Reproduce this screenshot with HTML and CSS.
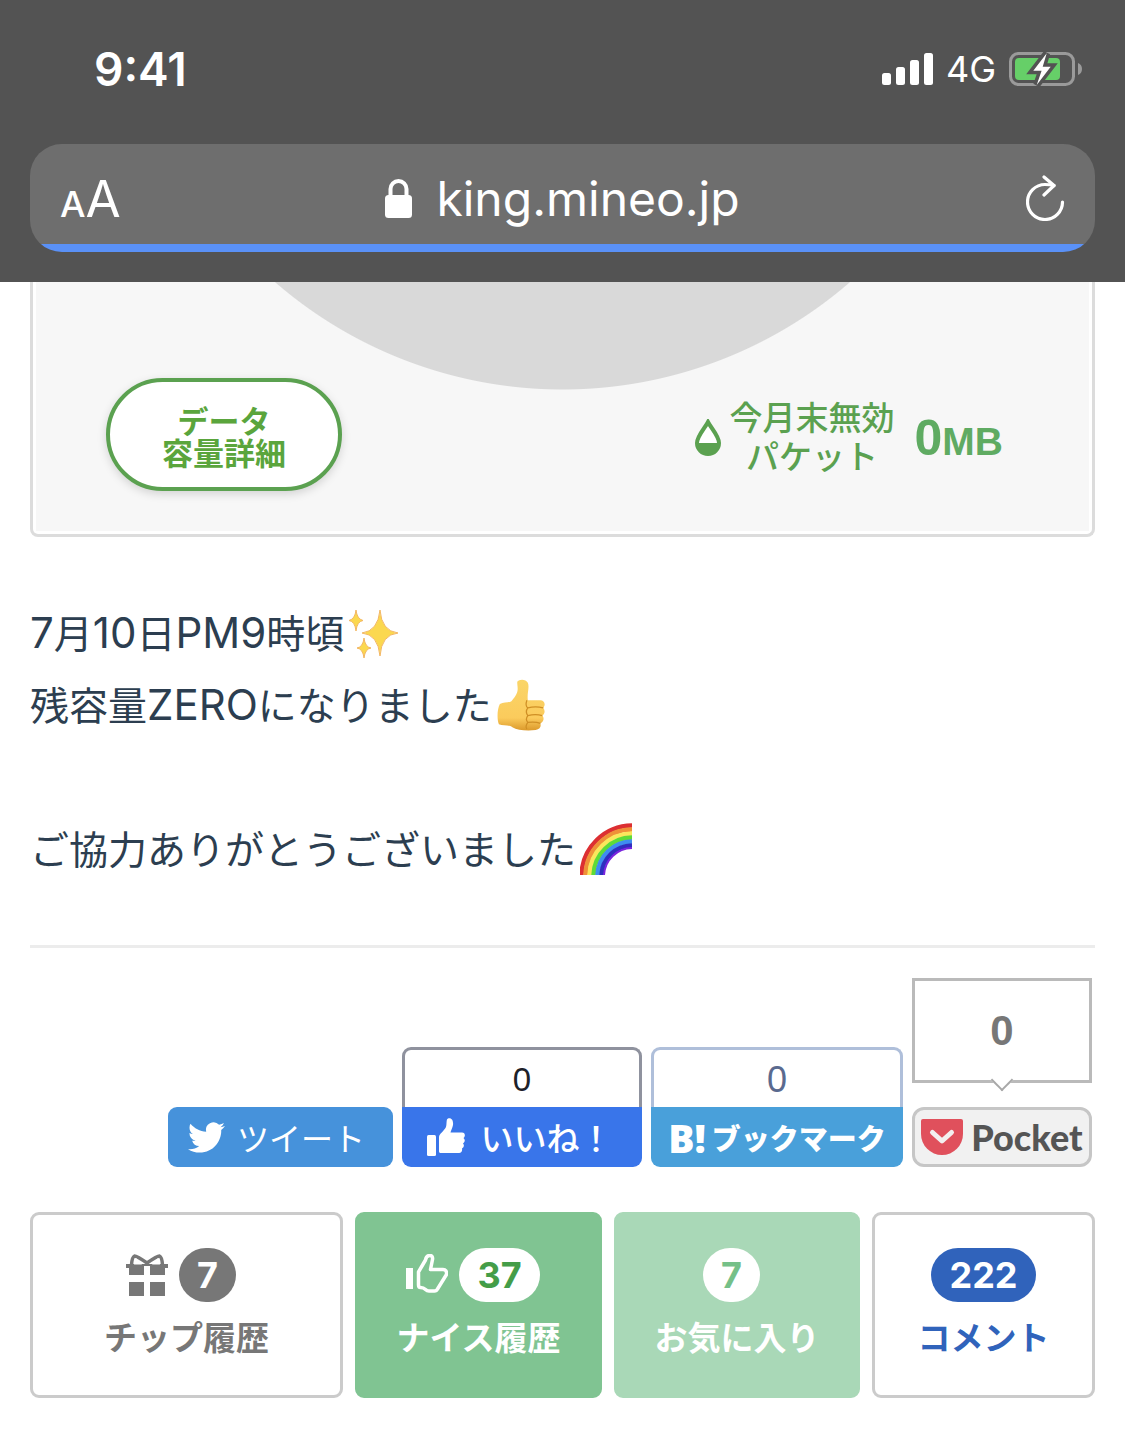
FILE: index.html
```html
<!DOCTYPE html>
<html lang="ja">
<head>
  <meta charset="UTF-8">
  <meta name="viewport" content="width=device-width, initial-scale=1.0">
  <title>king.mineo.jp</title>
  <link rel="stylesheet" href="styles.css">
</head>
<body>
  <header class="browser">
    <div class="status">
      <span class="time">9:41</span>
      <div class="status-right">
        <svg width="51" height="32" viewBox="0 0 51 32" fill="#fff">
          <rect x="0" y="20" width="9" height="12" rx="2.500"/>
          <rect x="14" y="14" width="9" height="18" rx="2.500"/>
          <rect x="28" y="7" width="9" height="25" rx="2.500"/>
          <rect x="42" y="0" width="9" height="32" rx="2.500"/>
        </svg>
        <span class="network">4G</span>
        <svg width="73" height="34" viewBox="0 0 73 34">
          <rect x="1.5" y="1.5" width="63" height="31" rx="8" fill="none" stroke="#9a9a9a" stroke-width="3"/>
          <path d="M69 11a6.500 6.500 0 0 1 0 12z" fill="#9a9a9a"/>
          <rect x="6" y="6" width="45" height="22" rx="4" fill="#66cf68"/>
          <path d="M37.700 1.300 24.300 18.700H32.600L27.700 33 41.700 14.700H33.700z" fill="#535353" stroke="#535353" stroke-width="7"/>
          <path d="M37.700 1.300 24.300 18.700H32.600L27.700 33 41.700 14.700H33.700z" fill="#fff"/>
        </svg>
      </div>
    </div>
    <div class="address-bar">
      <button class="text-size" aria-label="表示"><span class="small-a">A</span>A</button>
      <button class="address">
        <svg width="27" height="39" viewBox="0 0 27 39">
          <path d="M5.500 18V10a8 8 0 0 1 16 0v8" fill="none" stroke="#fff" stroke-width="4"/>
          <rect x="0" y="16" width="27" height="23" rx="3.500" fill="#fff"/>
        </svg>
        king.mineo.jp
      </button>
      <button class="reload" aria-label="再読み込み">
        <svg width="39" height="46" viewBox="0 0 39 46" fill="none" stroke="#fff" stroke-width="3.200" stroke-linecap="round" stroke-linejoin="round">
          <path d="M36.500 27A17.500 17.500 0 1 1 19 9.500Q24 9.500 28 10.500"/>
          <path d="M18 2 28 10.500 18 20"/>
        </svg>
      </button>
    </div>
  </header>

  <main>
    <div class="photo">
      <div class="photo-inner">
        <button class="detail">データ<br>容量詳細</button>
        <div class="packet">
          <svg width="26" height="37" viewBox="0 0 26 37">
            <path d="M13 3C10 9 2 17 2 24a11 11 0 0 0 22 0C24 17 16 9 13 3z" fill="#fff" stroke="#5ba150" stroke-width="4"/>
            <path d="M2 24a11 11 0 0 0 22 0z" fill="#5ba150"/>
          </svg>
          <span class="packet-name">今月末無効<br>パケット</span>
          <span class="packet-value">0<small>MB</small></span>
        </div>
      </div>
    </div>

    <p class="text">
      <span class="latin">7</span>月<span class="latin">10</span>日<span class="latin">PM9</span>時頃<svg class="emoji" viewBox="0 0 54 54" role="img" aria-label="✨">
        <g fill="#fbd84f" stroke="#f3b765" stroke-width="1">
          <path d="M32 4Q33.500 25 50 27 33.500 28.500 32 50 30 28.500 14 27 30 25 32 4z"/>
          <path d="M8 4Q9 13 15 14.500 9 15.500 8 25 7 15.500 1 14.500 7 13 8 4z"/>
          <path d="M16 32Q17 41 23 42 17 43 16 52 15 43 9 42 15 41 16 32z"/>
        </g>
      </svg><br>
      残容量<span class="latin">ZERO</span>になりました<svg class="emoji" viewBox="0 -1 54 56" role="img" aria-label="👍">
        <defs>
          <linearGradient id="skin" x1="0" y1="0" x2="0" y2="1">
            <stop offset="0" stop-color="#fad568"/>
            <stop offset="0.750" stop-color="#fbcb5c"/>
            <stop offset="1" stop-color="#dc9a2c"/>
          </linearGradient>
        </defs>
        <path d="M3 26C0 32 0 42 2 47 6 49 12 47 16 50 21 53 30 54 40 53 45 52 46 49 45 46 49 44 49 40 47 38 51 35 49 31 48 30 51 26 49 22 45 22L32 22C31 15 34 8 32 4 30 0 23 0 21 3 21 10 24 13 15 23 12 25 7 24 3 26z" fill="url(#skin)"/>
        <path d="M31 22Q29 28 32 30 29 34 32 38 29 42 32 45 29 49 31 52M32 30Q40 28 48 30M32 38Q40 36 47 38M32 45Q40 44 45 46" fill="none" stroke="#cf8f25" stroke-width="1.300"/>
      </svg><br>
      <br>
      ご協力ありがとうございました<svg class="emoji" viewBox="1 -1 54 54" role="img" aria-label="🌈">
        <g fill="none" stroke-width="4.500">
          <path d="M2.500 52A51 51 0 0 1 53 2.500" stroke="#dc2f32"/>
          <path d="M6.500 52A47 47 0 0 1 53 6.500" stroke="#ef9138"/>
          <path d="M10.500 52A43 43 0 0 1 53 10.500" stroke="#fae75c"/>
          <path d="M14.500 52A39 39 0 0 1 53 14.500" stroke="#5edb37"/>
          <path d="M18.500 52A35 35 0 0 1 53 18.500" stroke="#3e8df0"/>
          <path d="M22.500 52A31 31 0 0 1 53 22.500" stroke="#2f2ebf"/>
          <path d="M25 52A28.500 28.500 0 0 1 53 25" stroke="#7a24de" stroke-width="2"/>
        </g>
      </svg>
    </p>

    <hr>

    <div class="share">
      <button class="tweet">
        <svg width="37" height="37" viewBox="0 0 24 24" fill="#fff"><path d="M23.953 4.570a10 10 0 01-2.825.775 4.958 4.958 0 002.163-2.723c-.951.555-2.005.959-3.127 1.184a4.920 4.920 0 00-8.384 4.482C7.690 8.095 4.067 6.130 1.640 3.162a4.822 4.822 0 00-.666 2.475c0 1.710.870 3.213 2.188 4.096a4.904 4.904 0 01-2.228-.616v.060a4.923 4.923 0 003.946 4.827 4.996 4.996 0 01-2.212.085 4.936 4.936 0 004.604 3.417 9.867 9.867 0 01-6.102 2.105c-.390 0-.779-.023-1.170-.067a13.995 13.995 0 007.557 2.209c9.053 0 13.998-7.496 13.998-13.985 0-.210 0-.420-.015-.630A9.935 9.935 0 0024 4.590z"/></svg>
        ツイート
      </button>
      <div class="like">
        <span class="count">0</span>
        <button>
          <svg width="38" height="38" viewBox="0 0 38 38" fill="#fff">
            <rect x="0" y="17" width="9" height="21" rx="1.500"/>
            <path d="M12 19C12 16 17 13 19 9 20 6 19 1 21 .500 25-.500 26.500 3 26 7 25.500 10 24 12 23.500 14.500H35C38.500 14.500 38.500 18.500 36.500 20 38.500 22 38 24 36 25.500 37.500 27 37 29.500 35 30.500 35.500 33 34.500 35 32 35H14C12.500 35 12 34.500 12 33z"/>
          </svg>
          いいね！
        </button>
      </div>
      <div class="hatena">
        <span class="count">0</span>
        <button><b>B!</b>ブックマーク</button>
      </div>
      <div class="pocket">
        <span class="count">0</span>
        <button>
          <svg width="42" height="36" viewBox="0 0 42 36">
            <path d="M2 0H40Q42 0 42 2V15A21 21 0 0 1 0 15V2Q0 0 2 0z" fill="#e0505c"/>
            <path d="M11.500 13.500 21 22 30.500 13.500" fill="none" stroke="#f3efef" stroke-width="5" stroke-linecap="round" stroke-linejoin="round"/>
          </svg>
          Pocket
        </button>
      </div>
    </div>

    <div class="actions">
      <button class="action tip">
        <span class="num">
          <svg width="42" height="43" viewBox="0 0 42 43" fill="#777">
            <path d="M0 10H42V14H39V21H24V12H18V21H3V14H0zM3 28H18V42H3zM24 28H39V42H24z"/>
            <path d="M5.500 11Q6 3 8.500 2 11 2 21 9 31 2 33.500 2 36 3 36.500 11" fill="none" stroke="#777" stroke-width="3.500"/>
            <path d="M8 10.500 10 4 16 10.500zM34 10.500 32 4 26 10.500z" fill="#fff"/>
          </svg>
          <span class="badge">7</span>
        </span>
        チップ履歴
      </button>
      <button class="action nice">
        <span class="num">
          <svg width="42" height="43" viewBox="0 0 42 43">
            <rect x="0" y="14" width="7" height="21" fill="#fff"/>
            <path d="M12.500 18 19.500 6C20.500 0 27.500 0 26.500 5.500L24.500 15.500H37Q41 15.500 40.500 20.500L31.500 35Q30.500 37 28.500 37H23Q21 37 19.500 35.500 17.500 33.500 14.500 33.500 12.500 33.500 12.500 31z" fill="none" stroke="#fff" stroke-width="3.500" stroke-linejoin="round"/>
          </svg>
          <span class="badge">37</span>
        </span>
        ナイス履歴
      </button>
      <button class="action favorite">
        <span class="num"><span class="badge">7</span></span>
        お気に入り
      </button>
      <button class="action comment">
        <span class="num"><span class="badge">222</span></span>
        コメント
      </button>
    </div>
  </main>
</body>
</html>
```
FILE: styles.css
```css
* {
  box-sizing: border-box;
}

body {
  margin: 0;
  background-color: #fff;
  font-family: Inter, 'Noto Sans CJK JP', sans-serif;
  color: #2c3e50;
}

button {
  display: flex;
  align-items: center;
  justify-content: center;
  margin: 0;
  padding: 0;
  border: none;
  background: none;
  font-family: inherit;
  color: inherit;
  white-space: nowrap;
  cursor: pointer;
}

svg {
  flex-shrink: 0;
}

/* browser chrome */
.browser {
  padding: 0 30px 30px;
  background-color: #535353;
  color: #fff;
}

.status {
  display: flex;
  align-items: center;
  justify-content: space-between;
  height: 144px;
  padding: 0 13px 6px 64px;
}

.time {
  font-size: 46px;
  font-weight: 600;
}

.status-right {
  display: flex;
  align-items: center;
  gap: 13px;
}

.network {
  font-size: 36px;
}

.address-bar {
  display: grid;
  grid-template-columns: 1fr auto 1fr;
  align-items: center;
  height: 108px;
  padding: 0 30px;
  border-radius: 32px;
  background: linear-gradient(to top, #5a91f7 8px, #6e6e6e 8px);
}

.text-size {
  align-items: baseline;
  justify-self: start;
  font-size: 51px;
}

.small-a {
  font-size: 36px;
  font-weight: 500;
}

.address {
  gap: 24px;
  font-size: 48px;
}

.reload {
  justify-self: end;
}

/* article */
main {
  padding: 0 30px 33px;
}

.photo {
  padding: 0 3px 3px;
  border: 3px solid #dcdcdc;
  border-top: none;
  border-radius: 0 0 8px 8px;
}

.photo-inner {
  display: flex;
  align-items: center;
  justify-content: space-between;
  padding: 96px 86px 40px 70px;
  background: radial-gradient(circle at 50% -331px, #d9d9d9 438px, #f7f7f7 439px);
}

.detail {
  width: 236px;
  height: 113px;
  padding-top: 7px;
  border: 4px solid #5ba150;
  border-radius: 57px;
  background-color: #fff;
  box-shadow: 0 3px 10px rgba(0, 0, 0, 0.15);
  font-size: 31px;
  font-weight: 700;
  line-height: 32px;
  color: #5aa53c;
}

.packet {
  display: flex;
  align-items: center;
  gap: 9px;
  padding-top: 6px;
  color: #5ba150;
}

.packet-name {
  font-size: 33px;
  font-weight: 500;
  line-height: 39px;
  text-align: center;
}

.packet-value {
  margin-left: 11px;
  font-family: 'Liberation Sans', Arial, sans-serif;
  font-size: 50px;
  font-weight: 700;
  color: #5fab62;
}

.packet-value small {
  font-size: 39px;
}

.text {
  margin: 61px 0 59px;
  font-size: 39px;
  line-height: 72px;
}

.latin {
  font-size: 42px;
  line-height: 1;
}

.emoji {
  width: 54px;
  height: 54px;
  margin-left: 4px;
  vertical-align: -12px;
}

hr {
  height: 3px;
  margin: 0 0 30px;
  border: none;
  background-color: #ececec;
}

/* share buttons */
.share {
  display: flex;
  align-items: flex-end;
  justify-content: flex-end;
  gap: 9px;
  padding-right: 3px;
}

.share button {
  width: 100%;
  height: 60px;
  border-radius: 0 0 9px 9px;
  color: #fff;
}

.share .tweet {
  gap: 12px;
  width: 225px;
  padding-right: 8px;
  border-radius: 9px;
  background-color: #4692db;
  font-size: 32px;
}

.count {
  display: flex;
  align-items: center;
  justify-content: center;
  height: 60px;
  padding-top: 3px;
  border: 3px solid #8f929e;
  border-bottom: none;
  border-radius: 9px 9px 0 0;
  font-family: 'Liberation Sans', Arial, sans-serif;
  font-size: 33px;
  color: #1d2129;
}

.like {
  width: 240px;
}

.like button {
  gap: 16px;
  padding-right: 5px;
  background-color: #3975ea;
  font-size: 33px;
  font-weight: 500;
}

.hatena {
  width: 252px;
}

.hatena .count {
  border-color: #afbfda;
  font-size: 36px;
  color: #5a6a8f;
}

.hatena button {
  gap: 6px;
  background-color: #49a0da;
  font-size: 29px;
  font-weight: 900;
}

.hatena b {
  font-family: 'Noto Sans', sans-serif;
  font-size: 39px;
  font-weight: 900;
}

.pocket {
  display: flex;
  flex-direction: column;
  gap: 24px;
  width: 180px;
}

.pocket .count {
  position: relative;
  height: 105px;
  padding-top: 0;
  border: 3px solid #bababa;
  border-radius: 0;
  font-size: 42px;
  font-weight: 700;
  color: #777;
}

.pocket .count::after {
  content: '';
  position: absolute;
  bottom: -8px;
  left: 50%;
  width: 14px;
  height: 14px;
  border: solid #a8a8a8;
  border-width: 0 2px 2px 0;
  background-color: #fff;
  transform: translateX(-50%) rotate(45deg);
}

.pocket button {
  gap: 8px;
  border: 3px solid #c6c6c6;
  border-radius: 12px;
  background-color: #f1f1f1;
  font-family: Lato, sans-serif;
  font-size: 36px;
  font-weight: 900;
  color: #555;
}

/* bottom actions */
.actions {
  display: grid;
  grid-template-columns: 313fr 247fr 246fr 223fr;
  gap: 12px;
  margin-top: 45px;
}

.action {
  flex-direction: column;
  justify-content: flex-start;
  gap: 12px;
  height: 186px;
  padding-top: 33px;
  border: 3px solid #cbcbcb;
  border-radius: 9px;
  font-size: 33px;
  font-weight: 700;
  line-height: 48px;
}

.num {
  display: flex;
  align-items: center;
  gap: 11px;
  margin-right: 11px;
}

.badge {
  min-width: 57px;
  height: 54px;
  padding: 0 18px;
  border-radius: 27px;
  background-color: #fff;
  font-size: 36px;
  line-height: 54px;
}

.tip {
  color: #777;
}

.tip .badge {
  background-color: #777;
  color: #fff;
}

.nice {
  border-color: #80c492;
  background-color: #80c492;
  color: #fff;
}

.nice .badge {
  color: #449d48;
}

.favorite {
  border-color: #a9d8b7;
  background-color: #a9d8b7;
  color: #fff;
}

.favorite .badge {
  color: #75c088;
}

.comment {
  color: #3063bb;
}

.comment .num {
  margin-right: 0;
}

.comment .badge {
  background-color: #3063bb;
  color: #fff;
}
```
